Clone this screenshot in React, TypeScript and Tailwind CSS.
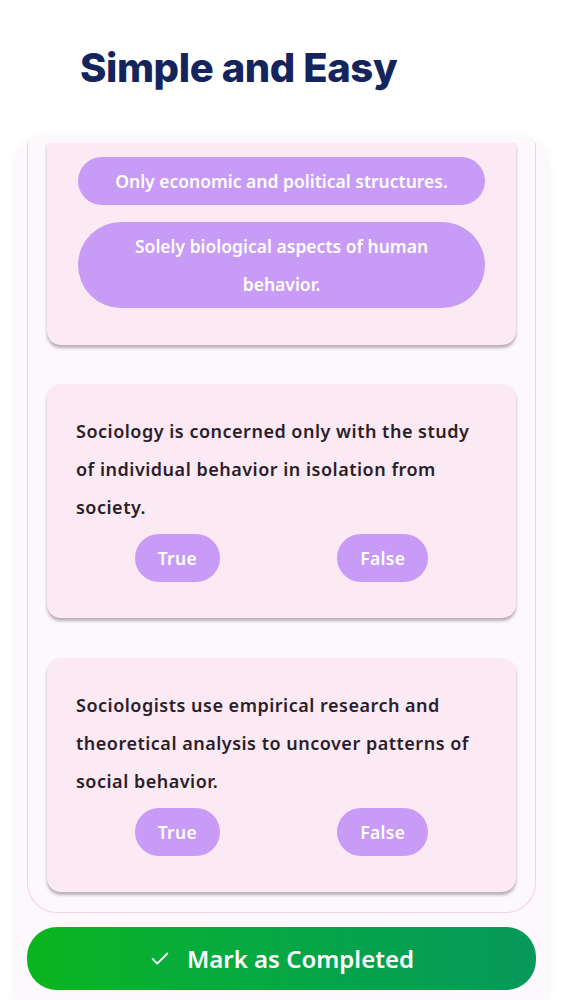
import { Check } from "lucide-react";

const body = { fontFamily: '"Noto Sans", "Open Sans", sans-serif' };

function Pill({ children, className = "" }: { children: React.ReactNode; className?: string }) {
  return (
    <div
      className={`rounded-full bg-[#c89bf6] text-center text-[17.5px] font-semibold leading-[38px] text-white ${className}`}
    >
      {children}
    </div>
  );
}

function TrueFalseCard({ question }: { question: string }) {
  return (
    <div className="rounded-[14px] bg-[#fbe9f3] px-[29px] pt-[28px] pb-[36px] shadow-[0_3px_3px_rgba(60,40,60,0.35)]">
      <p className="text-[18px] font-semibold leading-[38px] tracking-[0.5px] text-[#2b1e2b]">{question}</p>
      <div className="mt-[8px] flex justify-around">
        <Pill className="px-[23px] py-[5px] tracking-[0.3px]">True</Pill>
        <Pill className="px-[23px] py-[5px] tracking-[0.3px]">False</Pill>
      </div>
    </div>
  );
}

export default function App() {
  return (
    <div className="min-h-[1000px] bg-white" style={body}>
      <div className="h-[138px] pl-[80px] pt-[42px]">
        <h1
          className="text-[40px] font-extrabold leading-[52px] tracking-[-0.4px] text-[#14245c]"
          style={{ fontFamily: '"Inter", "Noto Sans", sans-serif' }}
        >
          Simple and Easy
        </h1>
      </div>

      <div className="mx-[15px] h-[862px] overflow-hidden rounded-t-[28px] bg-[#fcf8fc] px-[12px] pt-[5px] shadow-[0_0_10px_rgba(0,0,0,0.06)]">
        <div className="rounded-b-[30px] border-x border-b border-[#f3d3e1] px-[19px] pb-[20px]">
          <div className="rounded-b-[14px] bg-[#fbe9f3] px-[31px] pt-[14px] pb-[37px] shadow-[0_3px_3px_rgba(60,40,60,0.35)]">
            <div className="flex flex-col gap-[17px]">
              <Pill className="py-[5px]">Only economic and political structures.</Pill>
              <Pill className="px-[34px] py-[5px]">Solely biological aspects of human behavior.</Pill>
            </div>
          </div>

          <div className="mt-[39px] flex flex-col gap-[40px]">
            <TrueFalseCard question="Sociology is concerned only with the study of individual behavior in isolation from society." />
            <TrueFalseCard question="Sociologists use empirical research and theoretical analysis to uncover patterns of social behavior." />
          </div>
        </div>

        <button className="mt-[14px] flex h-[63px] w-full items-center justify-center gap-[16px] rounded-[30px] bg-gradient-to-r from-[#0ab51b] to-[#06995a] text-white">
          <Check className="h-[22px] w-[22px]" strokeWidth={2} />
          <span className="text-[24px] font-semibold">Mark as Completed</span>
        </button>
      </div>
    </div>
  );
}
